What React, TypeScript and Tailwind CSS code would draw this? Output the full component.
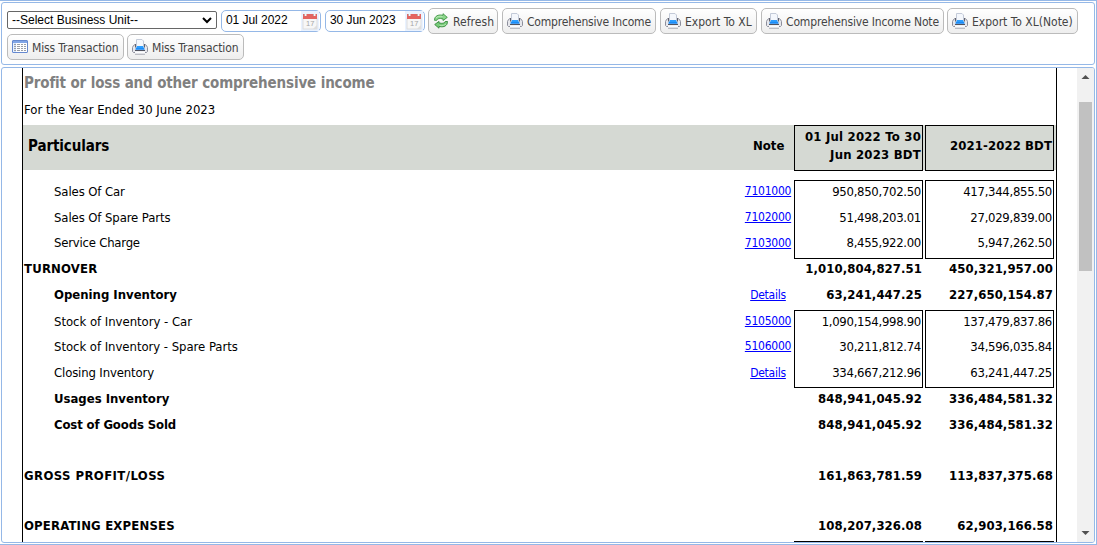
import { ReactNode } from "react";
import clsx from "clsx";

const PrinterIcon = () => (
  <svg width="16" height="16" viewBox="0 0 16 16" className="shrink-0">
    <path d="M1.5 6.5 L3 5.5 H13 L14.5 6.5 L15.5 8.5 V12.5 L14.5 13.5 H1.5 L0.5 12.5 V8.5 Z" fill="#e6e7ec" stroke="#8d8f9c" />
    <path d="M4.5 7.5 V0.5 H10 L11.5 2 V7.5 Z" fill="#f4f7fc" stroke="#c3cad8" />
    <path d="M3.5 5 V8.5 M12.5 5 V8.5" stroke="#62636e" />
    <path d="M5 7 H11 L12.5 10.5 H3.5 Z" fill="#2b9dff" />
    <path d="M3.5 9.5 H12.5 V10.5 H3.5 Z" fill="#0a78ea" />
    <path d="M3 11.5 H13" stroke="#50525f" />
    <path d="M3 12.5 H13 V15 H3 Z" fill="#fbfbfd" />
    <path d="M3 15.2 H13" stroke="#9092a0" strokeWidth="0.8" />
  </svg>
);

const RefreshIcon = () => (
  <svg width="16" height="16" viewBox="0 0 16 16" className="shrink-0">
    <path
      d="M1.5 7.3 C1.3 4 4 1.9 7.5 2 L10 2.3 V0.7 L14.3 4.4 L10 7.5 V5.9 L7.5 5.5 C5.5 5.4 4.2 6 3.8 7.3 Z"
      fill="#8bd68b"
      stroke="#3f9444"
      strokeWidth="0.9"
    />
    <path
      d="M14.5 8.5 C14.7 11.8 12 14 8.5 13.8 L6 13.5 V15.2 L1.7 11.5 L6 8.4 V10 L8.5 10.3 C10.5 10.4 11.8 9.8 12.2 8.5 Z"
      fill="#76cb78"
      stroke="#37883d"
      strokeWidth="0.9"
    />
    <path d="M3 5 C4 3.4 6 3 9.5 3.4 M6.5 12.3 C9.5 12.8 12 12.4 13 10.8" stroke="#c5efc1" strokeWidth="0.8" fill="none" />
  </svg>
);

const TableIcon = () => (
  <svg width="16" height="16" viewBox="0 0 16 16" className="shrink-0">
    <rect x="0.5" y="1.5" width="15" height="12" rx="0.5" fill="#fff" stroke="#6689cf" />
    <path d="M1 2 H15 V4 H1 Z" fill="#82a6e6" />
    <path d="M1.5 4 H4 V13 H1.5 Z" fill="#d5e6ff" />
    <path
      d="M2 5.5 H4 M5 5.5 H8 M9 5.5 H11 M12 5.5 H14 M2 7.5 H4 M5 7.5 H8 M9 7.5 H11 M12 7.5 H14 M2 9.5 H4 M5 9.5 H8 M9 9.5 H11 M12 9.5 H14 M2 11.5 H4 M5 11.5 H8 M9 11.5 H11 M12 11.5 H14"
      stroke="#9b9fa7"
    />
  </svg>
);

const CalendarIcon = () => (
  <svg width="18" height="20" viewBox="0 0 18 20" className="shrink-0">
    <rect width="18" height="20" fill="#e9f2ff" />
    <rect x="2" y="7" width="14" height="11" fill="#f7f7f7" stroke="#d8d8d8" strokeWidth="0.8" />
    <rect x="2" y="3" width="14" height="5" fill="#e36561" />
    <path d="M4.5 2 V5 M13.5 2 V5" stroke="#f5f5f5" strokeWidth="2" />
    <path d="M3.5 3 V5 M12.5 3 V5" stroke="#a9a9a9" strokeWidth="0.7" />
    <path d="M12 18 L16 14 V18 Z" fill="#dedede" />
    <text x="5" y="15" fontSize="7.5" fontFamily="Liberation Sans" fill="#a6a6a6">17</text>
  </svg>
);

const icons = { printer: PrinterIcon, refresh: RefreshIcon, table: TableIcon };

type ToolButtonProps = { icon: keyof typeof icons; label: string; className: string };

const ToolButton = ({ icon, label, className }: ToolButtonProps) => {
  const Icon = icons[icon];
  return (
    <button
      className={clsx(
        "flex h-[26px] shrink-0 items-center gap-1 rounded-[5px] border border-[#bbb] bg-linear-to-b from-white to-[#eee] pl-1 text-[12px] whitespace-nowrap text-[#444]",
        className
      )}
    >
      <Icon />
      <span className="pt-px">{label}</span>
    </button>
  );
};

const DateBox = ({ value }: { value: string }) => (
  <div className="mt-0.5 flex h-[22px] w-[100px] shrink-0 items-center justify-between rounded-[5px] border border-[#95b8e7] bg-white pr-px pl-1 font-['Liberation_Sans'] text-[12px]">
    <span className="pb-0.5 tracking-[-0.05px] whitespace-nowrap">{value}</span>
    <CalendarIcon />
  </div>
);

type Row = {
  label: string;
  note?: string;
  current: string;
  previous: string;
  bold?: boolean;
  indent?: boolean;
  box?: "top" | "middle" | "bottom";
  height: string;
  tracking?: string;
};

const rows: Row[] = [
  { label: "Sales Of Car", note: "7101000", current: "950,850,702.50", previous: "417,344,855.50", indent: true, box: "top", height: "h-[26px]", tracking: "tracking-[-0.1px]" },
  { label: "Sales Of Spare Parts", note: "7102000", current: "51,498,203.01", previous: "27,029,839.00", indent: true, box: "middle", height: "h-[26px]", tracking: "tracking-[-0.1px]" },
  { label: "Service Charge", note: "7103000", current: "8,455,922.00", previous: "5,947,262.50", indent: true, box: "bottom", height: "h-[27px]", tracking: "tracking-[-0.22px]" },
  { label: "TURNOVER", current: "1,010,804,827.51", previous: "450,321,957.00", bold: true, height: "h-[26px]", tracking: "tracking-[0.2px]" },
  { label: "Opening Inventory", note: "Details", current: "63,241,447.25", previous: "227,650,154.87", bold: true, indent: true, height: "h-[25px]" },
  { label: "Stock of Inventory - Car", note: "5105000", current: "1,090,154,998.90", previous: "137,479,837.86", indent: true, box: "top", height: "h-[25px]", tracking: "tracking-[-0.03px]" },
  { label: "Stock of Inventory - Spare Parts", note: "5106000", current: "30,211,812.74", previous: "34,596,035.84", indent: true, box: "middle", height: "h-[27px]", tracking: "tracking-[-0.04px]" },
  { label: "Closing Inventory", note: "Details", current: "334,667,212.96", previous: "63,241,447.25", indent: true, box: "bottom", height: "h-[26px]", tracking: "tracking-[-0.14px]" },
  { label: "Usages Inventory", current: "848,941,045.92", previous: "336,484,581.32", bold: true, indent: true, height: "h-[26px]" },
  { label: "Cost of Goods Sold", current: "848,941,045.92", previous: "336,484,581.32", bold: true, indent: true, height: "h-[51px]", tracking: "tracking-[-0.13px]" },
  { label: "GROSS PROFIT/LOSS", current: "161,863,781.59", previous: "113,837,375.68", bold: true, height: "h-[50px]", tracking: "tracking-[0.42px]" },
  { label: "OPERATING EXPENSES", current: "108,207,326.08", previous: "62,903,166.58", bold: true, height: "h-[26px]", tracking: "tracking-[0.18px]" }
];

// rows from the second box down sit one pixel lower in their line
const lowered = ["Usages Inventory", "Cost of Goods Sold", "GROSS PROFIT/LOSS", "OPERATING EXPENSES"];

const Amount = ({ row, children }: { row: Row; children: ReactNode }) => (
  <div
    className={clsx(
      "w-[129px] shrink-0 border-black text-right",
      row.box ? "border-x pr-px" : "pr-px",
      row.box === "top" && "border-t pt-px",
      row.box === "middle" && "pt-0.5",
      row.box === "bottom" && "border-b pt-px",
      row.bold ? "tracking-[0.08px]" : "tracking-[-0.3px]"
    )}
  >
    {children}
  </div>
);

const ReportRow = ({ row }: { row: Row }) => (
  <div
    className={clsx(
      "flex text-[13px] leading-5",
      row.height,
      row.bold && "font-bold",
      lowered.includes(row.label) && "pt-px"
    )}
  >
    <div
      className={clsx(
        "w-[718px]",
        row.indent ? "pl-[31px]" : "pl-px",
        row.box === "bottom" && "pt-px",
        (row.box === "top" || row.box === "middle") && "pt-0.5",
        row.tracking
      )}
    >
      {row.label}
    </div>
    <div
      className={clsx(
        "w-[53px] pl-px text-center text-[12px] font-normal tracking-[-0.25px]",
        row.box && "pt-px"
      )}
    >
      {row.note && <a href="#" className="text-[#0000ff] underline">{row.note}</a>}
    </div>
    <div className="flex gap-0.5">
      <Amount row={row}>{row.current}</Amount>
      <Amount row={row}>{row.previous}</Amount>
    </div>
  </div>
);

const Report = () => (
  <div className="ml-5 w-[1035px] shrink-0 overflow-hidden border-x border-black">
    <h1 className="h-8 pt-1 pl-px text-[15px] leading-[22px] font-bold tracking-[-0.14px] text-[#808080]">
      Profit or loss and other comprehensive income
    </h1>
    <p className="h-[25px] pl-px text-[13px] leading-5">For the Year Ended 30 June 2023</p>
    <div className="mb-[10px] flex h-[45px] bg-[#d5d9d3] text-[13px] font-bold">
      <div className="w-[718px] pt-2.5 pl-[5px] text-[15px] leading-[22px] tracking-[-0.1px]">Particulars</div>
      <div className="w-[53px] pt-2.5 pl-3 leading-[22px]">Note</div>
      <div className="flex gap-0.5">
        <div className="h-[46px] w-[129px] border border-black pt-0.5 pr-px text-right leading-[18px] tracking-[0.22px]">
          01 Jul 2022 To 30
          <br />
          Jun 2023 BDT
        </div>
        <div className="h-[46px] w-[129px] border border-black pt-[11px] pr-px text-right leading-[18px] tracking-[0.1px]">
          2021-2022 BDT
        </div>
      </div>
    </div>
    {rows.map((row) => (
      <ReportRow key={row.label} row={row} />
    ))}
    <div className="flex justify-end gap-0.5 pr-0.5">
      <div className="h-10 w-[129px] border border-black" />
      <div className="h-10 w-[129px] border border-black" />
    </div>
  </div>
);

const Scrollbar = () => (
  <div className="ml-auto flex w-[17px] flex-col items-center bg-[#f1f1f1]">
    <svg width="17" height="34" viewBox="0 0 17 34">
      <path d="M4.5 11 L8.5 7 L12.5 11 Z" fill="#505050" />
    </svg>
    <div className="h-[169px] w-[13px] bg-[#c1c1c1]" />
    <svg width="17" height="17" viewBox="0 0 17 17" className="mt-auto">
      <path d="M4.5 6 L8.5 10 L12.5 6 Z" fill="#505050" />
    </svg>
  </div>
);

const App = () => {
  return (
    <div className="flex h-[545px] w-[1097px] flex-col gap-0.5 overflow-hidden border-y border-r border-[#95b8e7] bg-white p-px font-['DejaVu_Sans_Condensed','DejaVu_Sans',sans-serif] text-black">
      <div className="h-[63px] shrink-0 rounded-[3px] border border-[#95b8e7] pt-[5px] pl-[5px]">
        <div className="flex items-start">
          <div className="mt-[3px] mr-1 flex h-[18px] w-[210px] shrink-0 items-center justify-between rounded-[2px] border border-[#666] pr-1 pl-1 font-['Liberation_Sans'] text-[12px]">
            <span>--Select Business Unit--</span>
            <svg width="10" height="8" viewBox="0 0 10 8">
              <path d="M1 2 L5 6 L9 2" fill="none" stroke="#000" strokeWidth="2" />
            </svg>
          </div>
          <DateBox value="01 Jul 2022" />
          <div className="w-1 shrink-0" />
          <DateBox value="30 Jun 2023" />
          <ToolButton icon="refresh" label="Refresh" className="ml-[3px] w-[70px] tracking-[0.05px]" />
          <ToolButton icon="printer" label="Comprehensive Income" className="ml-1 w-[154px] tracking-[-0.18px]" />
          <ToolButton icon="printer" label="Export To XL" className="ml-1 w-[97px]" />
          <ToolButton icon="printer" label="Comprehensive Income Note" className="ml-1 w-[183px] tracking-[-0.14px]" />
          <ToolButton icon="printer" label="Export To XL(Note)" className="ml-[3px] w-[131px]" />
        </div>
        <div className="flex gap-[3px]">
          <ToolButton icon="table" label="Miss Transaction" className="w-[117px] tracking-[-0.14px]" />
          <ToolButton icon="printer" label="Miss Transaction" className="w-[117px] tracking-[-0.14px]" />
        </div>
      </div>
      <div className="flex h-[476px] overflow-hidden rounded-[3px] border border-[#95b8e7]">
        <Report />
        <Scrollbar />
      </div>
    </div>
  );
};

export default App;
